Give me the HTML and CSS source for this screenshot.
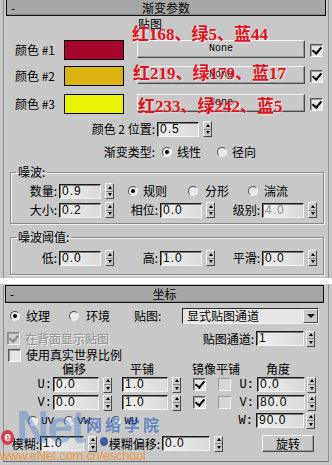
FILE: index.html
```html
<!DOCTYPE html>
<html>
<head>
<meta charset="utf-8">
<link rel="stylesheet" href="styles.css">
</head>
<body>

<div class="rollout r1">
	<div class="bar"><span class="bar-dash">-</span><span class="bar-title">渐变参数</span></div>
	<div class="map-head">贴图</div>

	<div class="color-row">
		<span class="color-lbl">颜色 #1</span>
		<span class="swatch c1"></span>
		<span class="btn map-btn">None</span>
		<span class="chk on"></span>
	</div>
	<div class="color-row second">
		<span class="color-lbl">颜色 #2</span>
		<span class="swatch c2"></span>
		<span class="btn map-btn">None</span>
		<span class="chk on"></span>
	</div>
	<div class="color-row third">
		<span class="color-lbl">颜色 #3</span>
		<span class="swatch c3"></span>
		<span class="btn map-btn">None</span>
		<span class="chk on"></span>
	</div>

	<div class="row pos-row">
		<span class="wide-lbl">颜色 2 位置:</span>
		<span class="num">0.5</span>
		<span class="spin"><i></i><i></i></span>
	</div>
	<div class="row type-row">
		<span class="wide-lbl">渐变类型:</span>
		<span class="radio on"></span><span class="rtext">线性</span>
		<span class="radio gap16"></span><span class="rtext">径向</span>
	</div>

	<fieldset class="group noise">
		<legend>噪波:</legend>
		<div class="row">
			<span class="lbl col1">数量:</span>
			<span class="num">0.9</span>
			<span class="spin"><i></i><i></i></span>
			<span class="radio on first-radio"></span><span class="rtext">规则</span>
			<span class="radio fractal"></span><span class="rtext t7">分形</span>
			<span class="radio turb"></span><span class="rtext t6">湍流</span>
		</div>
		<div class="row next">
			<span class="lbl col1">大小:</span>
			<span class="num">0.2</span>
			<span class="spin"><i></i><i></i></span>
			<span class="lbl col2">相位:</span>
			<span class="num">0.0</span>
			<span class="spin"><i></i><i></i></span>
			<span class="lbl col3">级别:</span>
			<span class="num off">4.0</span>
			<span class="spin"><i></i><i></i></span>
		</div>
	</fieldset>

	<fieldset class="group threshold">
		<legend>噪波阈值:</legend>
		<div class="row">
			<span class="lbl col1">低:</span>
			<span class="num">0.0</span>
			<span class="spin"><i></i><i></i></span>
			<span class="lbl col2">高:</span>
			<span class="num">1.0</span>
			<span class="spin"><i></i><i></i></span>
			<span class="lbl col3">平滑:</span>
			<span class="num">0.0</span>
			<span class="spin"><i></i><i></i></span>
		</div>
	</fieldset>
</div>

<div class="gap"></div>

<div class="rollout r2">
	<div class="bar"><span class="bar-dash">-</span><span class="bar-title">坐标</span></div>

	<div class="row tex-row">
		<span class="radio on"></span><span class="rtext t6">纹理</span>
		<span class="radio env"></span><span class="rtext t7">环境</span>
		<span class="map-lbl">贴图:</span>
		<span class="combo"><span class="combo-text">显式贴图通道</span><span class="combo-arrow"></span></span>
	</div>

	<div class="row back-row">
		<span class="chk on dis"></span>
		<span class="back-text">在背面显示贴图</span>
		<span class="chan-lbl">贴图通道:</span>
		<span class="num wide">1</span>
		<span class="spin tight"><i></i><i></i></span>
	</div>

	<div class="row real-row">
		<span class="chk"></span>
		<span class="real-text">使用真实世界比例</span>
	</div>

	<div class="row head-row">
		<span class="h-offset">偏移</span>
		<span class="h-tile">平铺</span>
		<span class="h-mirror">镜像</span>
		<span class="h-tile2">平铺</span>
		<span class="h-angle">角度</span>
	</div>

	<div class="row uv-row">
		<span class="axis">U:</span>
		<span class="num mid">0.0</span>
		<span class="spin"><i></i><i></i></span>
		<span class="num mid tile">1.0</span>
		<span class="spin"><i></i><i></i></span>
		<span class="chk on mirror"></span>
		<span class="chk light tile-chk"></span>
		<span class="axis right">U:</span>
		<span class="num wide">0.0</span>
		<span class="spin tight"><i></i><i></i></span>
	</div>
	<div class="row uv-row">
		<span class="axis">V:</span>
		<span class="num mid">0.0</span>
		<span class="spin"><i></i><i></i></span>
		<span class="num mid tile">1.0</span>
		<span class="spin"><i></i><i></i></span>
		<span class="chk on mirror"></span>
		<span class="chk light tile-chk"></span>
		<span class="axis right">V:</span>
		<span class="num wide">80.0</span>
		<span class="spin tight"><i></i><i></i></span>
	</div>
	<div class="row uv-row w-row">
		<span class="radio r-uv"></span><span class="mono-text">UV</span>
		<span class="radio r-vw"></span><span class="mono-text">VW</span>
		<span class="radio r-wu"></span><span class="mono-text">WU</span>
		<span class="axis right push">W:</span>
		<span class="num wide">90.0</span>
		<span class="spin tight"><i></i><i></i></span>
	</div>

	<div class="row blur-row">
		<span class="blur-lbl">模糊:</span>
		<span class="num blur">1.0</span>
		<span class="spin"><i></i><i></i></span>
		<span class="blur2-lbl">模糊偏移:</span>
		<span class="num wide">0.0</span>
		<span class="spin"><i></i><i></i></span>
		<span class="btn rotate">旋转</span>
	</div>
</div>

<!-- overlays: annotations and watermark -->
<div class="note n1">红168、绿5、蓝44</div>
<div class="note n2">红219、绿179、蓝17</div>
<div class="note n3">红233、绿242、蓝5</div>

<div class="wm-e">e</div>
<div class="wm-net">Net</div>
<div class="wm-cn">网络学院</div>
<div class="wm-dot"></div>
<div class="wm-url">www.eNet.com.cn/eschool</div>

</body>
</html>
```

FILE: styles.css
```css
* {
	box-sizing: border-box;
}
body {
	margin: 0;
	width: 332px;
	height: 465px;
	overflow: hidden;
	position: relative;
	background: #c8c8c8;
	font-family: "Noto Sans CJK SC", sans-serif;
	font-size: 12px;
	line-height: 14px;
	color: #000;
}

.rollout {
	margin: 0 3px;
	background: #c8c8c8;
	border-left: 1px solid #8c8c8c;
	border-right: 1px solid #8c8c8c;
}
.r1 {
	height: 278px;
}
.r2 {
	height: 177px;
	border-bottom: 1px solid #6c6c6c;
}
.gap {
	height: 6px;
	background: #fff;
}

.bar {
	display: grid;
	grid-template-columns: 16px 1fr 16px;
	height: 16px;
	margin: 0 2px;
	padding-top: 1px;
	background: #a7a7a7;
	border: 1px solid #111;
	border-top: 0;
	box-shadow: inset 0 -1px 0 #8a8a8a;
	line-height: 14px;
}
.r2 .bar {
	height: 18px;
	margin: 1px 4px 0 1px;
	padding-top: 0;
	border-top: 1px solid #111;
	line-height: 15px;
}
.bar-dash {
	padding-left: 4px;
}
.bar-title {
	text-align: center;
}

.map-head {
	height: 14px;
	margin-top: 1px;
	padding-left: 134px;
}

/* colour rows */
.color-row {
	display: flex;
	align-items: center;
	height: 20px;
	margin-top: 9px;
	padding-left: 11px;
}
.color-row.second {
	margin-top: 6px;
}
.color-row.third {
	margin-top: 8px;
}
.color-lbl {
	width: 49px;
}
.swatch {
	width: 60px;
	height: 20px;
	border: 1px solid #000;
}
.c1 { background: #a8052c; }
.c2 { background: #dbb311; }
.c3 { background: #e9f205; }
.map-btn {
	width: 168px;
	height: 18px;
	margin-left: 13px;
	align-self: flex-start;
	font-family: "Liberation Mono", monospace;
	font-size: 10px;
}
.color-row .chk {
	margin-left: 5px;
}

/* controls */
.btn {
	display: flex;
	align-items: center;
	justify-content: center;
	flex: none;
	background: #c9c9c9;
	border: 1px solid;
	border-color: #f4f4f4 #4a4a4a #4a4a4a #f4f4f4;
	box-shadow: inset -1px -1px 0 #9a9a9a;
}
.chk {
	position: relative;
	flex: none;
	width: 13px;
	height: 13px;
	background: #e6e6e6;
	border: 1px solid;
	border-color: #5a5a5a #fafafa #fafafa #5a5a5a;
	box-shadow: inset 1px 1px 0 #9c9c9c;
}
.chk.on::after {
	content: "";
	position: absolute;
	left: 3px;
	top: 0;
	width: 4px;
	height: 7px;
	border: solid #000;
	border-width: 0 2px 2px 0;
	transform: rotate(40deg);
}
.chk.dis {
	background: #d0d0d0;
	border-color: #8a8a8a #f0f0f0 #f0f0f0 #8a8a8a;
}
.chk.dis::after {
	border-color: #8a8a8a;
}
.chk.light {
	background: #d6d6d6;
	border-color: #9a9a9a #f4f4f4 #f4f4f4 #9a9a9a;
	box-shadow: none;
}
.radio {
	position: relative;
	flex: none;
	width: 10px;
	height: 10px;
	border-radius: 50%;
	background: #e9e9e9;
	border: 1px solid;
	border-color: #505050 #f6f6f6 #f6f6f6 #505050;
}
.radio.on::after {
	content: "";
	position: absolute;
	left: 2px;
	top: 2px;
	width: 4px;
	height: 4px;
	border-radius: 50%;
	background: #000;
}
.rtext {
	margin-left: 5px;
}
.num {
	flex: none;
	width: 42px;
	height: 15px;
	padding-left: 2px;
	background: linear-gradient(90deg, #f0f0f0, #dadada);
	border: 1px solid;
	border-color: #1c1c1c #f2f2f2 #f2f2f2 #1c1c1c;
	box-shadow: inset 1px 1px 0 #7c7c7c;
	font-family: "Liberation Sans", sans-serif;
	font-size: 12px;
	line-height: 13px;
	letter-spacing: 1px;
}
.num.off {
	color: #8e8e8e;
}
.spin {
	display: flex;
	flex-direction: column;
	flex: none;
	width: 9px;
	height: 16px;
	margin-left: 4px;
	background: #c9c9c9;
	border: 1px solid;
	border-color: #f4f4f4 #4a4a4a #4a4a4a #f4f4f4;
}
.spin i {
	flex: 1;
	display: flex;
	align-items: center;
	justify-content: center;
}
.spin i:first-child {
	border-bottom: 1px solid #8a8a8a;
}
.spin i::before {
	content: "";
	border-left: 2.5px solid transparent;
	border-right: 2.5px solid transparent;
	border-bottom: 3px solid #000;
}
.spin i + i::before {
	border-bottom: 0;
	border-top: 3px solid #000;
}
.spin.tight {
	margin-left: 2px;
}

.row {
	display: flex;
	align-items: center;
	height: 16px;
}
.pos-row {
	margin-top: 7px;
}
.type-row {
	height: 14px;
	margin-top: 8px;
}
.wide-lbl {
	width: 153px;
	text-align: right;
	padding-right: 2px;
}
.type-row .radio {
	margin-left: 5px;
}
.type-row .rtext + .radio {
	margin-left: 16px;
}

/* group boxes */
.group {
	min-width: 0;
	margin: 7px 4px 0 6px;
	padding: 5px 0;
	border: 1px solid #8a8a8a;
	box-shadow: 1px 1px 0 #f0f0f0, inset 1px 1px 0 #f0f0f0;
}
.group legend {
	margin-left: 5px;
	padding: 0 2px;
	line-height: 12px;
}
.threshold {
	padding: 7px 0 8px;
}
.group .row.next {
	margin-top: 3px;
}
.lbl {
	flex: none;
	text-align: right;
	padding-right: 1px;
}
.lbl + .num {
	margin-left: 1px;
}
.col1 { width: 47px; }
.col2 { width: 45px; }
.col3 { width: 46px; }
.first-radio { margin-left: 14px; }
.fractal { margin-left: 21px; }
.turb { margin-left: 19px; }
.t7 { margin-left: 7px; }
.t6 { margin-left: 6px; }

/* coordinates */
.tex-row {
	margin-top: 5px;
}
.tex-row > .radio:first-child {
	margin-left: 6px;
}
.env {
	margin-left: 19px;
}
.map-lbl {
	width: 30px;
	margin-left: 24px;
}
.combo {
	display: flex;
	width: 137px;
	height: 16px;
	margin-left: 18px;
	background: #e6e6e6;
	border: 1px solid;
	border-color: #2a2a2a #f2f2f2 #f2f2f2 #2a2a2a;
}
.combo-text {
	flex: 1;
	padding-left: 4px;
	line-height: 14px;
}
.combo-arrow {
	display: flex;
	align-items: center;
	justify-content: center;
	width: 15px;
	background: #c9c9c9;
	border: 1px solid;
	border-color: #f4f4f4 #4a4a4a #4a4a4a #f4f4f4;
}
.combo-arrow::before {
	content: "";
	border-left: 4px solid transparent;
	border-right: 4px solid transparent;
	border-top: 4px solid #000;
}

.back-row {
	height: 15px;
	margin-top: 7px;
}
.back-row .chk {
	margin-left: 3px;
}
.back-text {
	width: 85px;
	margin-left: 5px;
	color: #8e8e8e;
	text-shadow: 1px 1px 0 #eeeeee;
}
.chan-lbl {
	width: 145px;
	text-align: right;
	padding-right: 1px;
}
.num.wide {
	width: 48px;
	margin-left: 1px;
}
.real-row {
	height: 14px;
	margin-top: 2px;
}
.real-row .chk {
	margin-left: 4px;
}
.real-text {
	margin-left: 5px;
}

.head-row {
	height: 14px;
}
.h-offset { margin-left: 58px; }
.h-tile { margin-left: 44px; }
.h-mirror { margin-left: 38px; }
.h-angle { margin-left: 26px; }

.uv-row {
	height: 15px;
	margin-top: 1px;
}
.uv-row + .uv-row {
	margin-top: 3px;
}
.axis {
	flex: none;
	width: 49px;
	padding-right: 1px;
	text-align: right;
	font-family: "Liberation Mono", monospace;
	font-size: 12px;
}
.axis.right {
	width: 25px;
	padding-right: 2px;
}
.num.mid {
	width: 46px;
}
.num.tile {
	margin-left: 10px;
}
.mirror {
	margin-left: 12px;
}
.tile-chk {
	margin-left: 12px;
}
.w-row .r-uv { margin-left: 24px; }
.w-row .r-vw { margin-left: 10px; }
.w-row .r-wu { margin-left: 21px; }
.mono-text {
	margin-left: 3px;
	font-family: "Liberation Mono", monospace;
	font-size: 11px;
}
.axis.push {
	margin-left: auto;
}
.w-row {
	padding-right: 13px;
}

.blur-row {
	height: 17px;
	margin-top: 7px;
}
.blur-lbl {
	width: 35px;
	text-align: right;
}
.num.blur {
	width: 44px;
	margin-left: 1px;
}
.blur2-lbl {
	width: 64px;
	text-align: right;
	padding-right: 1px;
}
.rotate {
	width: 52px;
	height: 17px;
	margin-left: 39px;
}

/* red annotations laid over the panel */
.note {
	position: absolute;
	white-space: nowrap;
	font-family: "Liberation Serif", "Noto Sans CJK SC", serif;
	font-weight: bold;
	font-size: 17px;
	line-height: 17px;
	color: #e3121b;
	text-shadow: 1px 1px 2px rgba(255, 255, 255, 0.6);
}
.n1 { left: 132px; top: 26px; }
.n2 { left: 133px; top: 65px; }
.n3 { left: 138px; top: 98px; }

/* watermark */
.wm-e {
	position: absolute;
	left: 1px;
	top: 430px;
	width: 13px;
	height: 15px;
	border-radius: 50%;
	background: rgba(210, 40, 60, 0.85);
	color: #fff;
	font: bold 12px/14px "Liberation Sans", sans-serif;
	text-align: center;
}
.wm-net {
	position: absolute;
	left: 16px;
	top: 404px;
	font: bold 46px/46px "Liberation Sans", sans-serif;
	letter-spacing: -2px;
	color: rgba(60, 120, 210, 0.4);
}
.wm-cn {
	position: absolute;
	left: 86px;
	top: 416px;
	font: bold 16px/17px "Noto Sans CJK SC", sans-serif;
	letter-spacing: 3px;
	color: rgba(40, 90, 190, 0.6);
}
.wm-dot {
	position: absolute;
	left: 100px;
	top: 437px;
	width: 8px;
	height: 9px;
	border-radius: 50%;
	background: rgba(30, 60, 150, 0.8);
}
.wm-url {
	position: absolute;
	left: 0;
	top: 449px;
	font: 13px/14px "Liberation Sans", sans-serif;
	letter-spacing: -0.3px;
	color: #f09a3a;
}
```
